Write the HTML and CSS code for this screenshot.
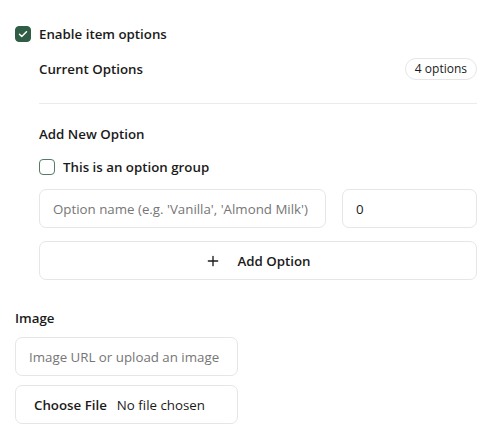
FILE: index.html
```html
<!DOCTYPE html>
<html>
<head>
<meta charset="utf-8">
<link rel="stylesheet" href="styles.css">
</head>
<body>
<div class="page">
  <label class="check-row enable">
    <span class="box checked">
      <svg width="12" height="12" viewBox="0 0 24 24" fill="none" stroke="#fff" stroke-width="3" stroke-linecap="round" stroke-linejoin="round"><path d="M5 12.5l4.5 4.5L19 7.5"/></svg>
    </span>
    <span class="label-strong">Enable item options</span>
  </label>

  <div class="options">
    <div class="current">
      <span class="label-strong">Current Options</span>
      <span class="badge">4 options</span>
    </div>
    <div class="divider"></div>
    <div class="label-strong add-title">Add New Option</div>
    <label class="check-row group">
      <span class="box"></span>
      <span class="label-strong">This is an option group</span>
    </label>
    <div class="inputs">
      <div class="field name"><span class="placeholder">Option name (e.g. 'Vanilla', 'Almond Milk')</span></div>
      <div class="field price"><span class="value">0</span></div>
    </div>
    <div class="add-btn">
      <svg width="16" height="16" viewBox="0 0 24 24" fill="none" stroke="#1a1a1a" stroke-width="2" stroke-linecap="round"><path d="M12 5v14M5 12h14"/></svg>
      <span>Add Option</span>
    </div>
  </div>

  <div class="label-strong image-title">Image</div>
  <div class="field url"><span class="placeholder">Image URL or upload an image</span></div>
  <div class="field file"><span class="file-btn">Choose File</span><span class="file-none">No file chosen</span></div>
</div>
</body>
</html>
```
FILE: styles.css
```css
* { box-sizing: border-box; }
html, body { margin: 0; padding: 0; background: #fff; }
body {
  font-family: "Open Sans", "Noto Sans", sans-serif;
  font-size: 13.3px;
  color: #1a1a1a;
}
.page { padding: 26px 16px 0 15px; }
.check-row { display: flex; align-items: center; gap: 8px; height: 20px; }
.enable { margin-top: -2px; }
.box {
  width: 16px; height: 16px; border-radius: 4px;
  border: 1.5px solid #557a66;
  display: flex; align-items: center; justify-content: center;
  flex: none;
}
.box.checked { background: #2f5d45; border-color: #2f5d45; }
.label-strong { font-weight: 600; line-height: 20px; }
.options { margin-left: 24px; }
.current {
  display: flex; justify-content: space-between; align-items: center;
  margin-top: 14px; height: 22px;
}
.badge {
  border: 1px solid #e6e6e6; border-radius: 999px;
  height: 22px; padding: 0 9px; line-height: 20px;
  font-size: 12px; font-weight: 500;
}
.divider { height: 1px; background: #ebebeb; margin-top: 23px; }
.add-title { margin-top: 20px; }
.group { margin-top: 13px; }
.inputs { display: flex; gap: 16px; margin-top: 12px; }
.field {
  height: 39px; border: 1px solid #e6e6e6; border-radius: 7px;
  display: flex; align-items: center; padding: 0 13px;
}
.name { flex: 1; }
.price { width: 135px; }
.placeholder { color: #767676; }
.add-btn {
  margin-top: 13px; height: 39px;
  border: 1px solid #e6e6e6; border-radius: 7px;
  display: flex; align-items: center; justify-content: center; gap: 16px;
  font-weight: 600;
}
.image-title { margin-top: 28px; }
.url { width: 223px; margin-top: 9px; }
.file { width: 223px; margin-top: 9px; padding-left: 18px; }
.file-btn { font-weight: 600; margin-right: 10px; }
```
